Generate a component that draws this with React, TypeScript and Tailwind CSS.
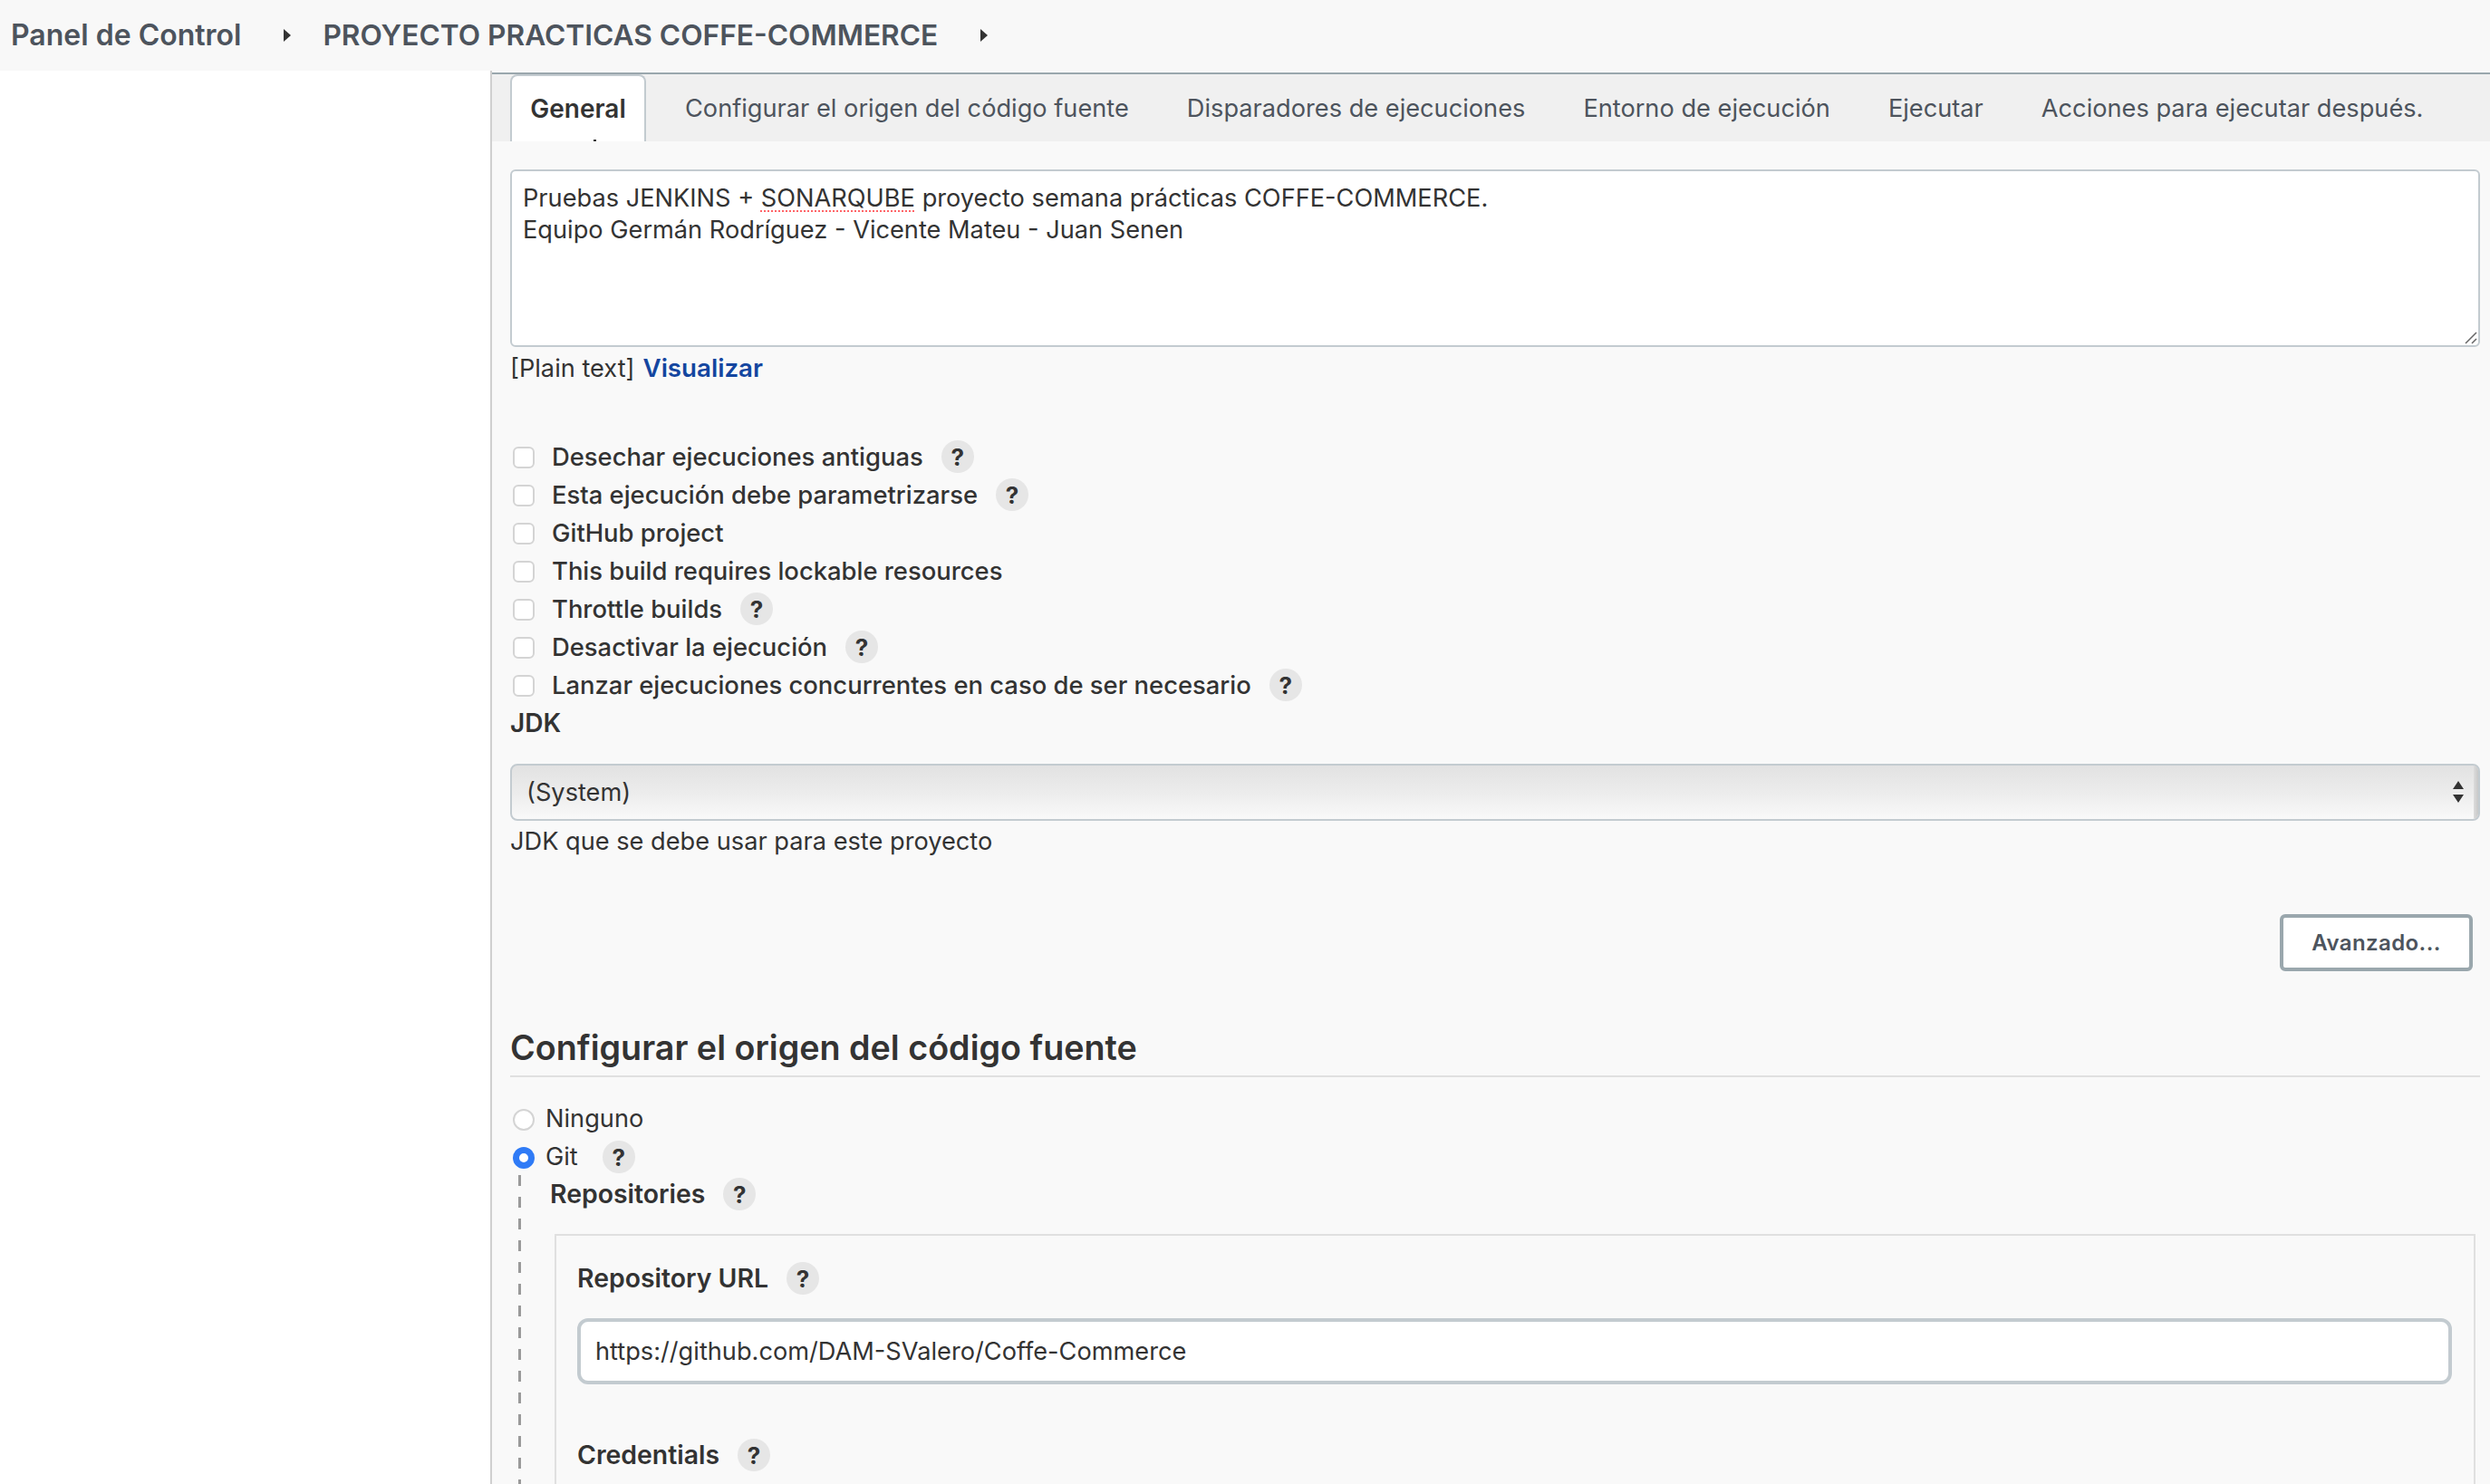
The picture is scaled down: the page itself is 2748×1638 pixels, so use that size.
const FONT = "font-['Inter','Noto_Sans',sans-serif]";

const TABS = [
  "Configurar el origen del código fuente",
  "Disparadores de ejecuciones",
  "Entorno de ejecución",
  "Ejecutar",
  "Acciones para ejecutar después.",
];

const CHECKS = [
  { label: "Desechar ejecuciones antiguas", help: true },
  { label: "Esta ejecución debe parametrizarse", help: true },
  { label: "GitHub project", help: false },
  { label: "This build requires lockable resources", help: false },
  { label: "Throttle builds", help: true },
  { label: "Desactivar la ejecución", help: true },
  { label: "Lanzar ejecuciones concurrentes en caso de ser necesario", help: true },
];

function Help({ className = "ml-5" }: { className?: string }) {
  return (
    <span className={`${className} flex h-9 w-9 shrink-0 items-center justify-center rounded-full bg-[#e6e6e6] text-[26px] font-bold text-[#333]`}>
      ?
    </span>
  );
}

function Caret() {
  return (
    <svg width="10" height="14" viewBox="0 0 10 14" className="text-[#333]">
      <path d="M1 0l8 7-8 7z" fill="currentColor" />
    </svg>
  );
}

export default function App() {
  return (
    <div className={`${FONT} flex h-[1638px] flex-col overflow-hidden bg-white text-[27.2px] text-[#333]`}>
      <header className="flex h-[78px] shrink-0 items-center bg-[#f8f8f8] pl-3 text-[31.7px] font-semibold text-[#4d545d]">
        <span className="text-[32px]">Panel de Control</span>
        <span className="ml-[46px] flex"><Caret /></span>
        <span className="ml-[34px]">PROYECTO PRACTICAS COFFE-COMMERCE</span>
        <span className="ml-[46px] flex"><Caret /></span>
      </header>

      <div className="flex min-h-0 flex-1">
        <aside className="w-[541px] shrink-0 bg-white" />

        <main className="min-w-0 flex-1 border-l-2 border-[#cfcfcf] bg-[#f9f9f9]">
          <div className="mt-[2px] flex h-[76px] border-t-2 border-[#9aa7ad] bg-[#f0f0f0] pl-[20px]">
            <div className="relative flex h-[74px] w-[150px] items-center justify-center rounded-t-lg border-x-2 border-t-2 border-[#c3cbd0] bg-white text-[28px] font-semibold text-[#333]">
              General
              <span className="absolute bottom-0 left-[90px] h-[2px] w-[3px] bg-[#333]" />
            </div>
            {TABS.map((tab) => (
              <div key={tab} className="ml-[22px] flex items-center px-[21px] pt-[2px] text-[#4d545d]">
                {tab}
              </div>
            ))}
          </div>

          <div className="pl-[20px] pr-[11px]">
            <div className="mt-[31px] h-[196px] rounded-md border-2 border-[#c3cbd0] bg-white px-3 pt-3 leading-[35px]">
              <div className="relative h-full">
                <div>
                  Pruebas JENKINS +{" "}
                  <span className="underline decoration-red-400 decoration-dotted decoration-2 underline-offset-4">SONARQUBE</span>{" "}
                  proyecto semana prácticas COFFE-COMMERCE.
                </div>
                <div>Equipo Germán Rodríguez - Vicente Mateu - Juan Senen</div>
                <svg width="14" height="14" viewBox="0 0 14 14" className="absolute bottom-[1px] right-[-11px] text-[#666]">
                  <path d="M1 13L13 1M8 13l5-5" stroke="currentColor" strokeWidth="1.5" fill="none" />
                </svg>
              </div>
            </div>

            <div className="mt-[4px] flex h-[40px] items-center">
              <span>[Plain text]</span>
              <span className="ml-[9px] text-[27.7px] font-semibold text-[#1446a0]">Visualizar</span>
            </div>

            <div className="mt-[56px]">
              {CHECKS.map((c) => (
                <div key={c.label} className="flex h-[42px] items-center text-[27.4px] font-medium">
                  <span className="ml-[3px] mt-[2px] h-[24px] w-[24px] shrink-0 rounded-md border-2 border-[#d4d4d4] bg-white" />
                  <span className="ml-[19px] pt-[1px]">{c.label}</span>
                  {c.help && <Help />}
                </div>
              ))}
            </div>

            <div className="flex h-[42px] items-center text-[28px] font-semibold">JDK</div>

            <div className="relative mt-[24px] flex h-[63px] items-center overflow-hidden rounded-lg border-2 border-[#c3cbd0] bg-gradient-to-b from-[#e2e2e2] via-[#ececec] to-[#f9f9f9] pl-[16px] pt-[2px]">
              (System)
              <span className="absolute inset-y-0 right-0 w-[5px] bg-gradient-to-r from-[#dcdcdc] to-[#c8c8c8]" />
              <svg width="14" height="26" viewBox="0 0 14 26" className="absolute right-[15px] top-[16px] text-[#333]">
                <path d="M7 1l6 9H1zM7 25L1 16h12z" fill="currentColor" />
              </svg>
            </div>

            <div className="mt-[6px] flex h-[34px] items-center">JDK que se debe usar para este proyecto</div>

            <div className="mt-[63px] flex justify-end pr-[8px]">
              <button className="h-[63px] w-[213px] rounded-md border-4 border-[#9aa7ad] bg-white text-[24px] font-semibold tracking-[0.4px] text-[#4d545d]">
                Avanzado...
              </button>
            </div>

            <h2 className="mt-[58px] border-b-2 border-[#e0e0e0] pb-[5px] text-[37.7px] font-semibold leading-[52px] text-[#333]">
              Configurar el origen del código fuente
            </h2>

            <div className="mt-[25px] flex h-[42px] items-center">
              <span className="ml-[3px] mt-[2px] h-[24px] w-[24px] shrink-0 rounded-full border-2 border-[#d4d4d4] bg-white" />
              <span className="ml-[12px]">Ninguno</span>
            </div>
            <div className="flex h-[42px] items-center">
              <span className="ml-[3px] mt-[2px] h-[24px] w-[24px] shrink-0 rounded-full border-[7px] border-[#2f7bf6] bg-white" />
              <span className="ml-[12px]">Git</span>
              <Help className="ml-[27px]" />
            </div>

            <div className="flex">
              <div className="ml-[9px] mt-[-1px] w-[3px] shrink-0 bg-[repeating-linear-gradient(to_bottom,#9a9a9a_0,#9a9a9a_12px,transparent_12px,transparent_24px)]" />
              <div className="min-w-0 flex-1">
                <div className="ml-[32px] flex h-[40px] items-center text-[28.4px] font-semibold">
                  Repositories
                  <Help />
                </div>
                <div className="ml-[37px] mr-[5px] mt-[24px] h-[400px] border-2 border-[#e0e0e0] pl-[23px] pr-[24px] text-[28.4px] font-semibold">
                  <div className="mt-[26px] flex h-[42px] items-center">
                    Repository URL
                    <Help />
                  </div>
                  <div className="mt-[23px] flex h-[73px] items-center rounded-xl border-4 border-[#c3cbd0] bg-white pl-[16px] pt-[2px] text-[27.2px] font-normal">
                    https://github.com/DAM-SValero/Coffe-Commerce
                  </div>
                  <div className="mt-[57px] flex h-[42px] items-center">
                    Credentials
                    <Help />
                  </div>
                </div>
              </div>
            </div>
          </div>
        </main>
      </div>
    </div>
  );
}
